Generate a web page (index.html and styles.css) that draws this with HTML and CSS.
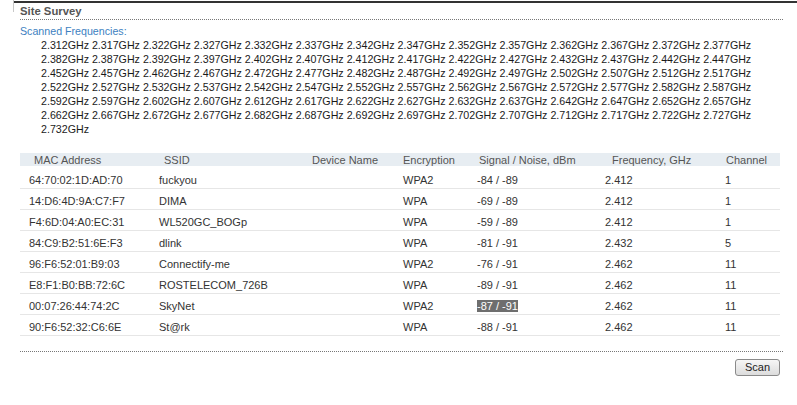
FILE: index.html
```html
<!DOCTYPE html>
<html lang="en">
<head>
    <meta charset="UTF-8">
    <title>Site Survey</title>
    <link rel="stylesheet" href="styles.css">
</head>
<body>
    <div class="panel">
        <h2 class="title">Site Survey</h2>
        <div class="label">Scanned Frequencies:</div>
        <div class="freqs">2.312GHz 2.317GHz 2.322GHz 2.327GHz 2.332GHz 2.337GHz 2.342GHz 2.347GHz 2.352GHz 2.357GHz 2.362GHz 2.367GHz 2.372GHz 2.377GHz 2.382GHz 2.387GHz 2.392GHz 2.397GHz 2.402GHz 2.407GHz 2.412GHz 2.417GHz 2.422GHz 2.427GHz 2.432GHz 2.437GHz 2.442GHz 2.447GHz 2.452GHz 2.457GHz 2.462GHz 2.467GHz 2.472GHz 2.477GHz 2.482GHz 2.487GHz 2.492GHz 2.497GHz 2.502GHz 2.507GHz 2.512GHz 2.517GHz 2.522GHz 2.527GHz 2.532GHz 2.537GHz 2.542GHz 2.547GHz 2.552GHz 2.557GHz 2.562GHz 2.567GHz 2.572GHz 2.577GHz 2.582GHz 2.587GHz 2.592GHz 2.597GHz 2.602GHz 2.607GHz 2.612GHz 2.617GHz 2.622GHz 2.627GHz 2.632GHz 2.637GHz 2.642GHz 2.647GHz 2.652GHz 2.657GHz 2.662GHz 2.667GHz 2.672GHz 2.677GHz 2.682GHz 2.687GHz 2.692GHz 2.697GHz 2.702GHz 2.707GHz 2.712GHz 2.717GHz 2.722GHz 2.727GHz 2.732GHz</div>

        <table class="survey">
            <colgroup>
                <col class="c-mac"><col class="c-ssid"><col class="c-dev"><col class="c-enc"><col class="c-sig"><col class="c-freq"><col class="c-ch">
            </colgroup>
            <thead>
                <tr>
                    <th>MAC Address</th>
                    <th>SSID</th>
                    <th>Device Name</th>
                    <th>Encryption</th>
                    <th>Signal / Noise, dBm</th>
                    <th>Frequency, GHz</th>
                    <th>Channel</th>
                </tr>
            </thead>
            <tbody>
                <tr><td>64:70:02:1D:AD:70</td><td>fuckyou</td><td></td><td>WPA2</td><td>-84 / -89</td><td>2.412</td><td>1</td></tr>
                <tr><td>14:D6:4D:9A:C7:F7</td><td>DIMA</td><td></td><td>WPA</td><td>-69 / -89</td><td>2.412</td><td>1</td></tr>
                <tr><td>F4:6D:04:A0:EC:31</td><td>WL520GC_BOGp</td><td></td><td>WPA</td><td>-59 / -89</td><td>2.412</td><td>1</td></tr>
                <tr><td>84:C9:B2:51:6E:F3</td><td>dlink</td><td></td><td>WPA</td><td>-81 / -91</td><td>2.432</td><td>5</td></tr>
                <tr><td>96:F6:52:01:B9:03</td><td>Connectify-me</td><td></td><td>WPA2</td><td>-76 / -91</td><td>2.462</td><td>11</td></tr>
                <tr><td>E8:F1:B0:BB:72:6C</td><td>ROSTELECOM_726B</td><td></td><td>WPA</td><td>-89 / -91</td><td>2.462</td><td>11</td></tr>
                <tr><td>00:07:26:44:74:2C</td><td>SkyNet</td><td></td><td>WPA2</td><td><span class="selected">-87 / -91</span></td><td>2.462</td><td>11</td></tr>
                <tr><td>90:F6:52:32:C6:6E</td><td>St@rk</td><td></td><td>WPA</td><td>-88 / -91</td><td>2.462</td><td>11</td></tr>
            </tbody>
        </table>

        <div class="actions">
            <button type="button">Scan</button>
        </div>
    </div>
</body>
</html>
```

FILE: styles.css
```css
body {
    margin: 0;
    font-family: "Liberation Sans", Arial, sans-serif;
    font-size: 11px;
    color: #333;
    background: #fff;
}

.panel {
    position: relative;
    margin: 1px 0 0 13px;
    padding: 0 14px 0 7px;
    border-top: 2px solid #333;
}

.panel::before {
    content: "";
    position: absolute;
    left: 0;
    top: -3px;
    width: 1px;
    height: 12px;
    background: #c8c8c8;
}

.title {
    margin: 0;
    padding: 1px 0 1px;
    font-size: 11.3px;
    line-height: 14px;
    font-weight: bold;
    color: #555;
    border-bottom: 1px dotted #777;
}

.label {
    margin-top: 4px;
    font-size: 10.67px;
    line-height: 14px;
    color: #3d7fc1;
}

.freqs {
    padding: 0 20px 0 21px;
    font-size: 10.67px;
    line-height: 14px;
    color: #1a1a1a;
}

.survey {
    margin-top: 17px;
    width: 760px;
    border-collapse: collapse;
    table-layout: fixed;
}

.c-mac { width: 130px; }
.c-ssid { width: 153px; }
.c-dev { width: 91px; }
.c-enc { width: 74px; }
.c-sig { width: 128px; }
.c-freq { width: 120px; }
.c-ch { width: 64px; }

.survey th {
    height: 12px;
    padding: 1px 0 0 9px;
    line-height: 12px;
    text-align: left;
    font-weight: normal;
    color: #555;
    background: #e7edf2;
    white-space: nowrap;
}

.survey th:nth-child(1),
.survey th:nth-child(2) { padding-left: 14px; }
.survey th:nth-child(5) { padding-left: 11px; }
.survey th:nth-child(6) { padding-left: 16px; }
.survey th:nth-child(7) { padding-left: 10px; }

.survey td {
    padding: 5px 0 1px 9px;
    line-height: 14px;
    border-bottom: 1px solid #e6e6e6;
    white-space: nowrap;
}

.survey tbody tr:first-child td {
    padding-top: 7px;
}

.selected {
    background: #6e6e6e;
    color: #fff;
}

.actions {
    display: flex;
    justify-content: flex-end;
    margin-top: 15px;
    padding: 7px 3px 0 0;
    border-top: 1px dotted #777;
}

button {
    height: 17px;
    width: 45px;
    padding: 0;
    font-family: "Liberation Sans", Arial, sans-serif;
    font-size: 11px;
    line-height: 15px;
    color: #222;
    border: 1px solid #8a8a8a;
    border-radius: 3px;
    background: linear-gradient(#f6f6f6, #dcdcdc);
    cursor: pointer;
}
```
